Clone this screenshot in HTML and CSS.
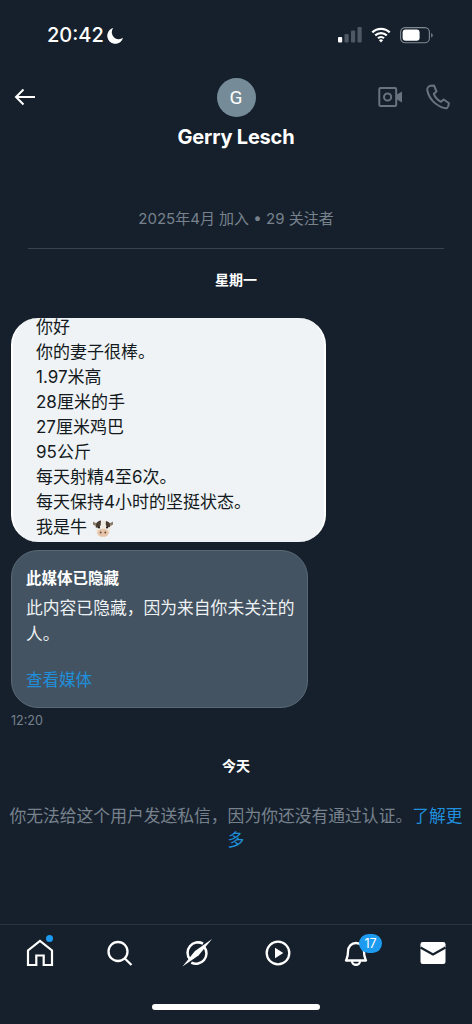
FILE: index.html
```html
<!DOCTYPE html>
<html lang="zh">
<head>
<meta charset="utf-8">
<title>Gerry Lesch</title>
<link rel="stylesheet" href="styles.css">
</head>
<body>
<div class="page">
  <div class="status">
    <div class="clock"><span>20:42</span>
      <svg class="moon" width="17" height="17" viewBox="0 0 17 17"><path d="M6.2 1A8 8 0 1 0 16 10.8 7 7 0 0 1 6.2 1Z" fill="#fff"/></svg>
    </div>
    <div class="indicators">
      <svg width="24" height="16" viewBox="0 0 24 16"><rect x="0" y="10" width="4.2" height="5.5" rx="1" fill="#fff"/><rect x="6.5" y="7" width="4.2" height="8.5" rx="1" fill="#4d5862"/><rect x="13" y="3.5" width="4.2" height="12" rx="1" fill="#4d5862"/><rect x="19.5" y="0" width="4.2" height="15.5" rx="1" fill="#4d5862"/></svg>
      <svg width="20" height="16" viewBox="0 0 20 16"><path d="M1.3 5.4a12.5 12.5 0 0 1 17.4 0M4.2 8.4a8.4 8.4 0 0 1 11.6 0M7 11.3a4.3 4.3 0 0 1 6 0" fill="none" stroke="#fff" stroke-width="2.2"/><path d="M10 15.5 7.9 13.2a3 3 0 0 1 4.2 0Z" fill="#fff"/></svg>
      <svg width="33" height="17" viewBox="0 0 33 17"><rect x=".6" y=".6" width="28.8" height="15.2" rx="4.6" fill="none" stroke="#7f8992" stroke-width="1.1"/><rect x="2.6" y="2.6" width="17" height="11.2" rx="3" fill="#fff"/><path d="M31.2 6v4.6a2.5 2.5 0 0 0 0-4.6Z" fill="#7f8992"/></svg>
    </div>
  </div>

  <header class="head">
    <button class="back" aria-label="返回">
      <svg width="22" height="18" viewBox="0 0 22 18"><path d="M21 9H2M9.5 1.5 2 9l7.5 7.5" fill="none" stroke="#fff" stroke-width="2"/></svg>
    </button>
    <div class="who">
      <div class="avatar">G</div>
      <div class="name">Gerry Lesch</div>
    </div>
    <div class="actions">
      <svg width="25" height="22" viewBox="0 0 25 22"><path d="M2.5 2h14.5a1.2 1.2 0 0 1 1.2 1.2v15.6a1.2 1.2 0 0 1-1.2 1.2H2.5a1.2 1.2 0 0 1-1.2-1.2V3.2A1.2 1.2 0 0 1 2.5 2Z" fill="none" stroke="#68737e" stroke-width="2"/><circle cx="9.6" cy="11" r="3.6" fill="none" stroke="#68737e" stroke-width="2"/><path d="M19 8.5 24 5.500v11l-5-3Z" fill="#68737e"/></svg>
      <svg width="25" height="26" viewBox="0 0 25 26"><path d="M4.500 1.800 8 1.500l2.500 6-2.700 2.300c1.200 3.300 3.700 6.200 7.300 8l2.600-2.300 5.300 3.700-.8 3c-.5 1.500-2 2.300-3.600 1.900C9.500 21.800 2.800 14.500 1.300 6 1 4 2.500 2.200 4.500 1.800Z" fill="none" stroke="#68737e" stroke-width="2" stroke-linejoin="round"/></svg>
    </div>
  </header>

  <main class="thread">
    <p class="joined">2025年4月 加入 • 29 关注者</p>
    <hr class="rule">
    <div class="day day-first">星期一</div>

    <div class="bubble">
      <div class="bubble-text">
        <div>你好</div>
        <div>你的妻子很棒。</div>
        <div>1.97米高</div>
        <div>28厘米的手</div>
        <div>27厘米鸡巴</div>
        <div>95公斤</div>
        <div>每天射精4至6次。</div>
        <div>每天保持4小时的坚挺状态。</div>
        <div class="cow-line">我是牛
          <svg class="cow" width="22" height="20" viewBox="0 0 22 20"><path d="M1 3.500c1.500 1 3 1.500 4 2l-1 3L1 6.500ZM21 3.500c-1.500 1-3 1.500-4 2l1 3 3-2Z" fill="#8a7a68"/><path d="M3.700 6.500C5 3.500 8 2.500 11 2.500s6 1 7.300 4c.8 2 .5 5-.3 7-1 3.500-3.500 5.500-7 5.500s-6-2-7-5.500c-.8-2-1.100-5-.3-7Z" fill="#f0ebe2"/><path d="M3.700 6.500C5 3.500 7 2.800 9 2.600l-.3 4.400c-.5 2-2.500 3-4.900 2.500ZM14 3c2 .4 3.500 1.300 4.300 3.500L18 9l-3 .5c-1.200-2-1.600-4-1-6.500Z" fill="#4a3d33"/><ellipse cx="11" cy="14.800" rx="5.800" ry="4" fill="#e6c4a8"/><circle cx="8.700" cy="14.500" r=".9" fill="#5d463a"/><circle cx="13.300" cy="14.500" r=".9" fill="#5d463a"/><circle cx="7" cy="9.500" r="1" fill="#111"/><circle cx="15" cy="9.500" r="1" fill="#111"/></svg>
        </div>
      </div>
    </div>

    <div class="hidden-card">
      <div class="hidden-title">此媒体已隐藏</div>
      <div class="hidden-body">此内容已隐藏，因为来自你未关注的人。</div>
      <div class="hidden-link">查看媒体</div>
    </div>
    <div class="stamp">12:20</div>

    <div class="day day-today">今天</div>
    <p class="notice">你无法给这个用户发送私信，因为你还没有通过认证。<span class="link">了解更多</span></p>
  </main>

  <nav class="tabs">
    <div class="tab">
      <svg width="30" height="30" viewBox="0 0 30 30"><path d="M3 27V12.500L15 3l12 9.500V27h-8.300v-9.500h-7.400V27Z" fill="none" stroke="#fff" stroke-width="2.200"/></svg>
      <span class="dot"></span>
    </div>
    <div class="tab">
      <svg width="30" height="30" viewBox="0 0 30 30"><circle cx="14" cy="13.500" r="9.500" fill="none" stroke="#fff" stroke-width="2.300"/><path d="m20.800 20.500 6.700 6.500" fill="none" stroke="#fff" stroke-width="2.300"/></svg>
    </div>
    <div class="tab">
      <svg width="32" height="30" viewBox="0 0 32 30"><path d="M9 21.500a10.400 10.400 0 0 1 13-15.800M23.300 9a10.400 10.400 0 0 1-13 15.600" fill="none" stroke="#fff" stroke-width="2.500"/><path d="M1.500 28.500 14 13l17-12-13.500 16.500Z" fill="#fff"/></svg>
    </div>
    <div class="tab tab-shift">
      <svg width="30" height="30" viewBox="0 0 30 30"><circle cx="15" cy="15" r="11.300" fill="none" stroke="#fff" stroke-width="2.300"/><path d="M12 9.800v10.400l8.300-5.200Z" fill="#fff"/></svg>
    </div>
    <div class="tab tab-shift">
      <svg width="30" height="30" viewBox="0 0 30 30"><path d="M5 22.500c1-2.500 2-3.500 2-9C7 8.500 10.500 5 15 5s8 3.500 8 8.500c0 5.500 1 6.500 2 9ZM11 23c0 5 8 5 8 0" fill="none" stroke="#fff" stroke-width="2.300" stroke-linejoin="round"/></svg>
      <span class="badge">17</span>
    </div>
    <div class="tab">
      <svg width="30" height="30" viewBox="0 0 30 30"><rect x="2.500" y="4" width="25" height="22" rx="2.200" fill="#fff"/><path d="m2.500 9.500 12.500 7 12.500-7" fill="none" stroke="#16202c" stroke-width="2.300"/></svg>
    </div>
  </nav>
  <div class="home-bar"><span></span></div>
</div>
</body>
</html>
```
FILE: styles.css
```css
* { box-sizing: border-box; }
html, body { margin: 0; padding: 0; background: #16202c; }
body {
  font-family: Inter, "Noto Sans CJK SC", "Noto Sans", sans-serif;
  color: #fff;
}
.page {
  width: 472px;
  height: 1024px;
  display: flex;
  flex-direction: column;
  overflow: hidden;
}

/* status bar */
.status {
  height: 70px;
  padding: 0 39px 0 47px;
  display: flex;
  align-items: center;
  justify-content: space-between;
}
.clock {
  display: flex;
  align-items: center;
  gap: 3px;
  font-size: 20px;
  font-weight: 500;
}
.indicators {
  display: flex;
  align-items: center;
  gap: 9px;
}

/* conversation header */
.head {
  height: 78px;
  padding-top: 8px;
  display: grid;
  grid-template-columns: 1fr auto 1fr;
}
.back {
  justify-self: start;
  align-self: start;
  margin: 10px 0 0 14px;
  padding: 0;
  border: 0;
  background: none;
  display: flex;
}
.who {
  display: flex;
  flex-direction: column;
  align-items: center;
}
.avatar {
  width: 39px;
  height: 39px;
  border-radius: 50%;
  background: #758c98;
  display: flex;
  align-items: center;
  justify-content: center;
  font-family: Roboto, sans-serif;
  font-size: 19px;
}
.name {
  margin-top: 7px;
  font-size: 20px;
  line-height: 26px;
  font-weight: 700;
  letter-spacing: -.2px;
}
.actions {
  justify-self: end;
  align-self: start;
  margin: 6px 21px 0 0;
  display: flex;
  align-items: center;
  gap: 23px;
}

/* thread */
.thread {
  flex: 1;
  min-height: 0;
}
.joined {
  margin: 60px 0 0;
  text-align: center;
  font-size: 15px;
  line-height: 22px;
  color: #77828d;
}
.rule {
  margin: 18px 28px 0;
  border: 0;
  height: 1px;
  background: #37434f;
}
.day {
  text-align: center;
  font-size: 14px;
  line-height: 20px;
  font-weight: 700;
}
.day-first { margin-top: 21px; }
.day-today { margin-top: 26px; }

.bubble {
  width: 315px;
  height: 224px;
  margin: 28px 0 0 11px;
  padding: 0 25px;
  border-radius: 27px;
  background: #eff3f6;
  border-left: 2px solid #fff;
  border-right: 2px solid #fff;
  overflow: hidden;
  color: #131a20;
  font-size: 17px;
  line-height: 25px;
}
.bubble-text { margin: -3px 0 0 -2px; }
.cow-line { display: flex; align-items: center; gap: 5px; }

.hidden-card {
  width: 297px;
  height: 158px;
  margin: 8px 0 0 11px;
  padding: 17px 8px 0 14px;
  border-radius: 27px;
  background: #435361;
  border: 1px solid #5a6875;
}
.hidden-title {
  font-size: 15.500px;
  line-height: 22px;
  font-weight: 700;
}
.hidden-body {
  margin-top: 5px;
  font-size: 16.800px;
  line-height: 26px;
  color: #eef1f3;
}
.hidden-link {
  margin-top: 20px;
  font-size: 16.500px;
  line-height: 26px;
  color: #1f8fdc;
}
.stamp {
  margin: 4px 0 0 11px;
  font-size: 12.500px;
  line-height: 18px;
  color: #77828d;
}
.notice {
  margin: 28px 6px 0;
  text-align: center;
  font-size: 16.800px;
  line-height: 24px;
  color: #77828d;
}
.link { color: #1f8fdc; }

/* tab bar */
.tabs {
  height: 60px;
  border-top: 1px solid #2a3540;
  padding: 13px 0 0 1px;
  display: grid;
  grid-template-columns: repeat(6, 1fr);
  align-items: start;
}
.tab {
  position: relative;
  display: flex;
  justify-content: center;
}
.tab-shift { transform: translateX(2px); }
.dot {
  position: absolute;
  left: 45px;
  top: -3px;
  width: 7px;
  height: 7px;
  border-radius: 50%;
  background: #1d9bf0;
}
.badge {
  position: absolute;
  left: 42px;
  top: -4px;
  width: 23px;
  height: 19px;
  border-radius: 10px;
  background: #1d9bf0;
  color: #fff;
  font-size: 12.500px;
  line-height: 19px;
  text-align: center;
}
.home-bar {
  height: 40px;
  padding-top: 20px;
  display: flex;
  justify-content: center;
  align-items: flex-start;
}
.home-bar span {
  width: 168px;
  height: 6px;
  border-radius: 3px;
  background: #fff;
}
```
